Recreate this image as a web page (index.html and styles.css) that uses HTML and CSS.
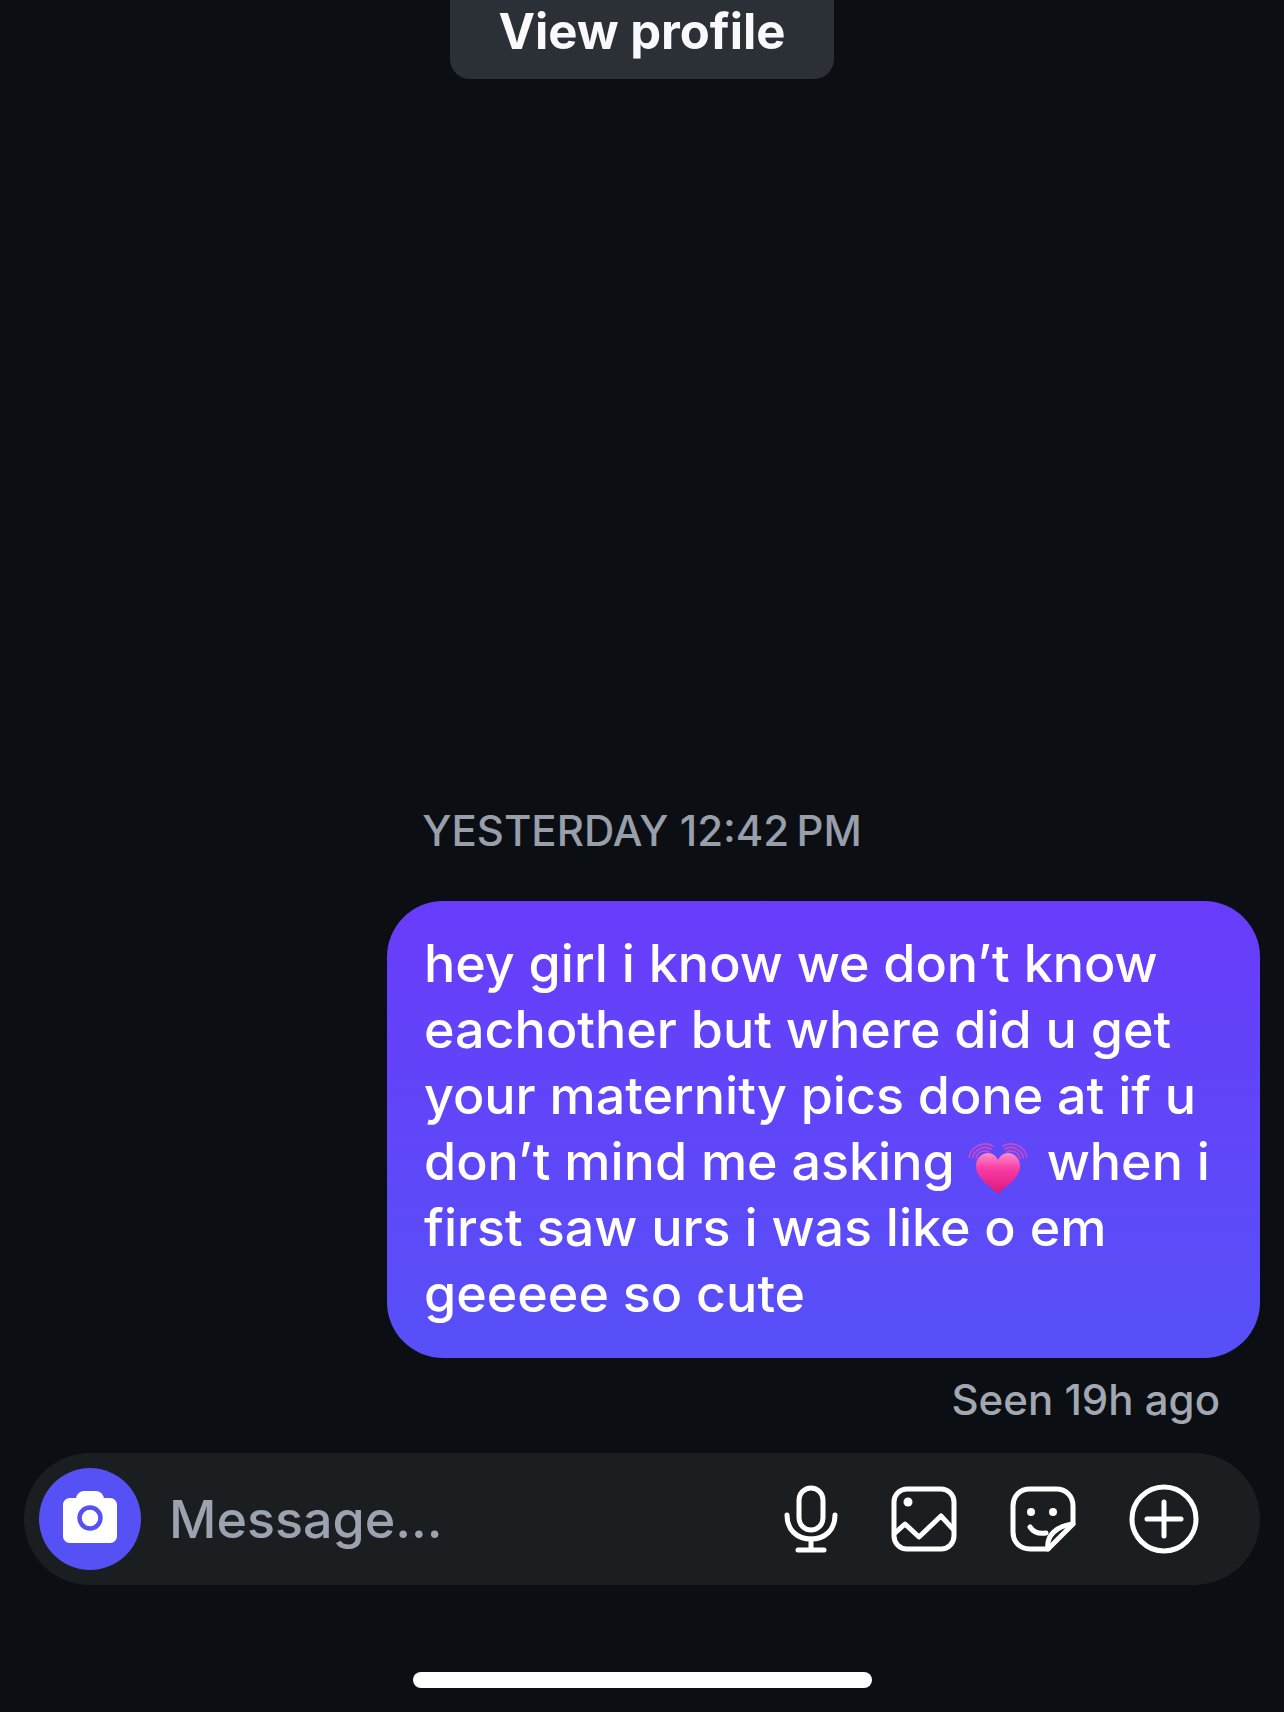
FILE: index.html
```html
<!DOCTYPE html>
<html lang="en">
<head>
    <meta charset="UTF-8">
    <meta name="viewport" content="width=device-width, initial-scale=1.0">
    <title>Message</title>
    <link rel="stylesheet" href="styles.css">
</head>
<body>
    <div class="chat">
        <div class="view-profile">View profile</div>
        <div class="thread">
            <div class="timestamp">YESTERDAY 12:42&#8201;PM</div>
            <div class="bubble">
                <p>hey girl i know we don’t know</p>
                <p>eachother but where did u get</p>
                <p>your maternity pics done at if u</p>
                <p>don’t mind me asking<svg class="heart" viewBox="0 0 60 60" aria-hidden="true">
                    <defs>
                        <linearGradient id="heartFill" x1="0" y1="0" x2="0" y2="1">
                            <stop offset="0" stop-color="#fb8ccb"/>
                            <stop offset="0.4" stop-color="#f93aa3"/>
                            <stop offset="1" stop-color="#d9187c"/>
                        </linearGradient>
                    </defs>
                    <g fill="none" stroke="#c54cc4" stroke-width="1.6" stroke-linecap="round">
                        <path d="M8.1 21.4 A9 9 0 0 1 21.5 15.2"/>
                        <path d="M4.7 20.8 A12.5 12.5 0 0 1 23.3 12.2"/>
                        <path d="M1.2 20.2 A16 16 0 0 1 25 9.1"/>
                        <path d="M51.9 21.4 A9 9 0 0 0 38.5 15.2"/>
                        <path d="M55.3 20.8 A12.5 12.5 0 0 0 36.7 12.2"/>
                        <path d="M58.8 20.2 A16 16 0 0 0 35 9.1"/>
                    </g>
                    <path fill="url(#heartFill)" d="M30 57 C22 49 8 41 8 29 C8 20 15 16 20 16 C25 16 28 19 30 23 C32 19 35 16 40 16 C45 16 52 20 52 29 C52 41 38 49 30 57 Z"/>
                </svg><span class="after-heart">when i</span></p>
                <p>first saw urs i was like o em</p>
                <p>geeeee so cute</p>
            </div>
            <div class="seen">Seen 19h ago</div>
        </div>
        <div class="composer">
            <div class="camera">
                <svg width="56" height="52" viewBox="0 0 56 52" aria-hidden="true">
                    <path fill="#fff" d="M8 7 H14 C15 3 18 0 22 0 H34 C38 0 41 3 42 7 H48 C52 7 55 10 55 14 V45 C55 49 52 52 48 52 H8 C4 52 1 49 1 45 V14 C1 10 4 7 8 7 Z"/>
                    <circle cx="28" cy="27" r="10.5" fill="none" stroke="#5551f5" stroke-width="4.5"/>
                </svg>
            </div>
            <div class="placeholder">Message...</div>
            <div class="tools">
                <svg class="tool" width="54" height="68" viewBox="0 0 54 68" aria-hidden="true">
                    <rect x="15" y="3" width="24" height="42" rx="12"/>
                    <path d="M3 30 C3 45 13 54 27 54 C41 54 51 45 51 30"/>
                    <path d="M27 54 V64"/>
                    <path d="M14 65 H40"/>
                </svg>
                <svg class="tool" width="66" height="66" viewBox="0 0 66 66" aria-hidden="true">
                    <rect x="3" y="3" width="60" height="60" rx="13"/>
                    <circle class="dot" cx="17" cy="16" r="4.5"/>
                    <path d="M4 47 L14 38 L28 51 L50 30 L62 43"/>
                </svg>
                <svg class="tool" width="66" height="66" viewBox="0 0 66 66" aria-hidden="true">
                    <path d="M38 63 H20 C10 63 3 56 3 46 V20 C3 10 10 3 20 3 H46 C56 3 63 10 63 20 V38 Z"/>
                    <path d="M38 63 C36 50 46 40 63 38"/>
                    <circle class="dot" cx="21" cy="26" r="4"/>
                    <circle class="dot" cx="43" cy="26" r="4"/>
                    <path d="M20 41 C24 47 30 48 36 47"/>
                </svg>
                <svg class="tool" width="70" height="70" viewBox="0 0 70 70" aria-hidden="true">
                    <circle cx="35" cy="35" r="32"/>
                    <path d="M35 18 V52"/>
                    <path d="M18 35 H52"/>
                </svg>
            </div>
        </div>
        <div class="home-bar"></div>
    </div>
</body>
</html>
```

FILE: styles.css
```css
body {
    margin: 0;
    font-family: Inter, "Liberation Sans", sans-serif;
    background-color: #0b0f13;
    color: #ffffff;
}
.chat {
    display: flex;
    flex-direction: column;
    height: 1712px;
    overflow: hidden;
}
.view-profile {
    align-self: center;
    width: 384px;
    height: 79px;
    box-sizing: border-box;
    padding-top: 5px;
    text-align: center;
    line-height: 54px;
    font-size: 49px;
    font-weight: 700;
    color: #f9f9fb;
    background-color: #2b2f36;
    border-radius: 0 0 20px 20px;
}
.thread {
    flex: 1;
    display: flex;
    flex-direction: column;
    justify-content: flex-end;
    padding: 0 24px 31px;
}
.timestamp {
    text-align: center;
    font-size: 42px;
    font-weight: 500;
    line-height: 44px;
    color: #989eaa;
    margin-bottom: 48px;
}
.bubble {
    align-self: flex-end;
    width: 873px;
    height: 457px;
    box-sizing: border-box;
    padding: 30px 30px 0 37px;
    border-radius: 56px;
    background: linear-gradient(180deg, #693cfb 0%, #5750f7 100%);
    font-size: 52px;
    font-weight: 500;
    line-height: 66px;
}
.bubble p {
    margin: 0;
    white-space: nowrap;
}
.heart {
    width: 60px;
    height: 60px;
    margin: -20px 0 -20px 13px;
    vertical-align: 3px;
}
.after-heart {
    margin-left: 19px;
}
.seen {
    align-self: flex-end;
    margin: 20px 40px 0 0;
    font-size: 42px;
    font-weight: 500;
    line-height: 44px;
    color: #a2a7b2;
}
.composer {
    display: flex;
    align-items: center;
    height: 132px;
    margin: 0 24px;
    padding-left: 15px;
    border-radius: 66px;
    background-color: #1b1e20;
}
.camera {
    display: flex;
    align-items: center;
    justify-content: center;
    width: 102px;
    height: 102px;
    box-sizing: border-box;
    padding-bottom: 5px;
    border-radius: 50%;
    background-color: #5551f5;
}
.placeholder {
    flex: 1;
    margin-left: 28px;
    font-size: 52px;
    font-weight: 500;
    color: #9ca2af;
}
.tools {
    display: flex;
    align-items: center;
    gap: 53px;
    padding-right: 61px;
}
.tool {
    fill: none;
    stroke: #ffffff;
    stroke-width: 5;
    stroke-linecap: round;
    stroke-linejoin: round;
}
.tool .dot {
    fill: #ffffff;
    stroke: none;
}
.home-bar {
    align-self: center;
    width: 459px;
    height: 16px;
    margin: 87px 0 24px;
    border-radius: 8px;
    background-color: #ffffff;
}
```
